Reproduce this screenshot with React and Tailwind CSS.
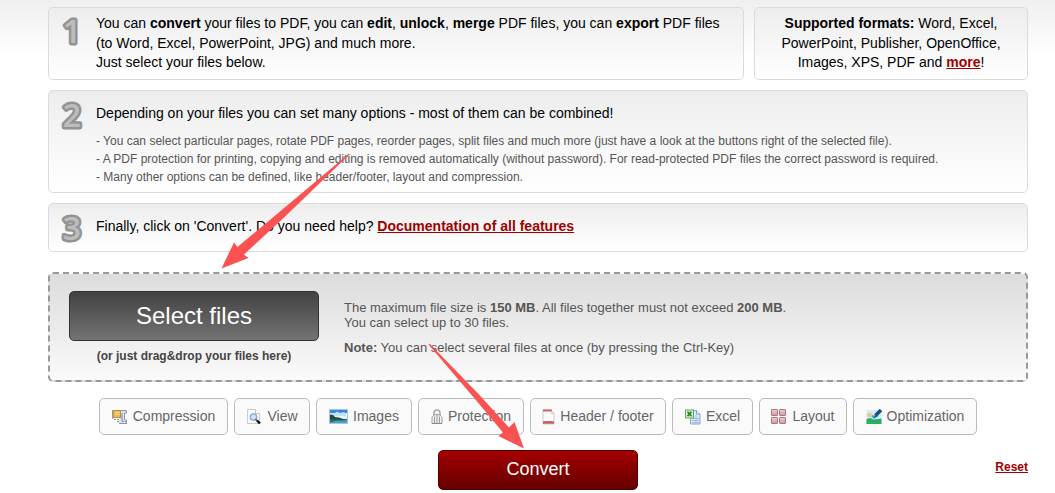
import { useState } from "react";

// Small 16px icons for the option buttons
const CompressionIcon = () => (
  <svg width="16" height="16" viewBox="0 0 16 16" className="shrink-0">
    <path d="M8 1.500h6.500v2.500h-2v7h2v3.500H7" fill="#d9e1ec" stroke="#8f9aa8" />
    <path d="M10 4v8" stroke="#8d99a8" strokeWidth="1.200" />
    <rect x="0.500" y="1.500" width="8" height="7" fill="#f1b43c" stroke="#b9924a" />
    <path d="M3 3.500h4.500M3 5.500h4.500" stroke="#fbdc8c" />
    <path d="M1 1.500v8.500" stroke="#8796a8" />
    <path d="M2 10.500h5M5 12.500h3M8 14.500h7M10 12.500h5" stroke="#8a94a2" strokeDasharray="2 1" />
  </svg>
);

const ViewIcon = () => (
  <svg width="16" height="16" viewBox="0 0 16 16" className="shrink-0">
    <path d="M1.500 0.500h8l4 4v10h-12z" fill="#f8f9fb" stroke="#c8cbd0" />
    <path d="M9.500 0.500v4h4" fill="#fff" stroke="#c3c6cc" />
    <circle cx="7.500" cy="8" r="3.200" fill="#cfe3f7" stroke="#84a8cf" strokeWidth="1.300" />
    <path d="M9.500 10l1.500 1.500" stroke="#555" strokeWidth="1.600" />
    <path d="M11 11.500l3 3" stroke="#111" strokeWidth="2.400" />
  </svg>
);

const ImagesIcon = () => (
  <svg width="19" height="15" viewBox="0 0 19 15" className="shrink-0">
    <rect x="0.500" y="0.500" width="18" height="14" fill="#e4f3fc" stroke="#a9c6dd" />
    <rect x="1" y="1" width="17" height="3" fill="#3888d6" />
    <path d="M2 4h4l2-1.500 3 1.500 4-1 2 2v2H3z" fill="#bfe2f7" />
    <rect x="1" y="10" width="17" height="4" fill="#4d9fc4" />
    <path d="M1 5.500l3 .500 2 2 4 .500 4 1.500 4 .500v.800H1z" fill="#1f4f3c" />
    <path d="M1 10.500h10l4 1H8l-7 2z" fill="#256a72" />
  </svg>
);

const ProtectionIcon = () => (
  <svg width="12" height="16" viewBox="0 0 12 16" className="shrink-0">
    <path d="M3 8V4a3 3 0 0 1 6 0v4" fill="none" stroke="#aaa" strokeWidth="1.600" />
    <path d="M1 14.500V9c0-2 2-3.500 5-3.500S11 7 11 9v5.500z" fill="#efefef" stroke="#a2a2a2" />
    <path d="M3.500 7.500V14M6 6v8M8.500 7.500V14" stroke="#999" />
    <path d="M1 14.500h10" stroke="#888" />
  </svg>
);

const HeaderFooterIcon = () => (
  <svg width="13" height="16" viewBox="0 0 13 16" className="shrink-0">
    <path d="M1 1h8l3 3v11H1z" fill="#fbfbfc" stroke="#cfcbd0" />
    <path d="M1 1.500h9" stroke="#d75f6b" strokeWidth="2" />
    <path d="M9.500 2v2.500h2.500" fill="#fff" stroke="#ccc" />
    <path d="M1 13.500h11" stroke="#d05a66" strokeWidth="2.500" />
    <path d="M3 12.500h7" stroke="#a9707a" />
  </svg>
);

const ExcelIcon = () => (
  <svg width="16" height="16" viewBox="0 0 16 16" className="shrink-0">
    <path d="M5.500 1.500h6l3.500 3.500v10h-9.500z" fill="#dce8fa" stroke="#8aa5d2" />
    <path d="M11.500 1.500v3.500h3.500" fill="#fff" stroke="#7e9bcb" />
    <path d="M7 9.500h7M7 11.500h7M7 13.500h7M11 6v8" stroke="#a4bbe3" />
    <rect x="0.500" y="1" width="8" height="8" fill="#dff2d0" stroke="#67a957" />
    <path d="M2.500 2.800l4 4.400M6.500 2.800l-4 4.400" stroke="#1f7a26" strokeWidth="1.700" />
  </svg>
);

const LayoutIcon = () => (
  <svg width="16" height="16" viewBox="0 0 16 16" className="shrink-0">
    <defs>
      <linearGradient id="tile" x1="0" y1="0" x2="0" y2="1">
        <stop offset="0" stopColor="#ecd3d6" />
        <stop offset="1" stopColor="#d4929b" />
      </linearGradient>
    </defs>
    <g fill="url(#tile)" stroke="#a9777e">
      <rect x="0.500" y="0.500" width="6" height="6" rx="0.500" />
      <rect x="8.500" y="0.500" width="6" height="6" rx="0.500" />
      <rect x="0.500" y="8.500" width="6" height="6" rx="0.500" />
      <rect x="8.500" y="8.500" width="6" height="6" rx="0.500" />
    </g>
  </svg>
);

const OptimizationIcon = () => (
  <svg width="16" height="16" viewBox="0 0 16 16" className="shrink-0">
    <rect x="0.500" y="1" width="15" height="14" fill="#d3ecfb" />
    <circle cx="3.500" cy="6" r="2.300" fill="#efc37e" />
    <path d="M0.500 10l4-1 3 1.500 8-1V15H.500z" fill="#27b05f" />
    <path d="M6 6.500l2.500 2.500" stroke="#3e9dc4" strokeWidth="2" />
    <path d="M15 1L9.500 6.500" stroke="#13507d" strokeWidth="3.500" />
    <path d="M9 5l-1.500 4.500L12 7.500z" fill="#12668f" />
  </svg>
);

const options = [
  { label: "Compression", icon: CompressionIcon, width: "w-[129px]" },
  { label: "View", icon: ViewIcon, width: "w-[76px]" },
  { label: "Images", icon: ImagesIcon, width: "w-[96px]" },
  { label: "Protection", icon: ProtectionIcon, width: "w-[106px]" },
  { label: "Header / footer", icon: HeaderFooterIcon, width: "w-[136px]" },
  { label: "Excel", icon: ExcelIcon, width: "w-[81px]" },
  { label: "Layout", icon: LayoutIcon, width: "w-[88px]" },
  { label: "Optimization", icon: OptimizationIcon, width: "w-[124px]" },
];

const StepNumber = ({ number }) => (
  <svg width="24" height="48" viewBox="0 0 24 48" className="-mt-2 shrink-0">
    <text
      x="12"
      y="37"
      textAnchor="middle"
      className="fill-[#bdbdbd] stroke-[#939393] stroke-[5px] font-['Open_Sans',sans-serif] text-[32px] font-semibold [paint-order:stroke] [stroke-linejoin:round]"
    >
      {number}
    </text>
  </svg>
);

const Panel = ({ className, children }) => (
  <div className={`rounded-[5px] border border-[#dbdbdb] bg-linear-to-b from-[#ededed] to-white ${className}`}>
    {children}
  </div>
);

const App = () => {
  const [active, setActive] = useState("");

  return (
    <div className="relative h-[493px] overflow-hidden bg-white bg-[linear-gradient(#efefef,#fff_56px)] pt-[7px] font-['Liberation_Sans',Arial,sans-serif] text-sm text-black">
      <div className="ml-12 w-[980px]">
        {/* Steps */}
        <div className="flex gap-[10px]">
          <Panel className="flex h-[73px] w-[696px] pl-[11px] pt-[6px]">
            <StepNumber number={1} />
            <p className="ml-3 whitespace-nowrap leading-[19.6px]">
              You can <b>convert</b> your files to PDF, you can <b>edit</b>, <b>unlock</b>, <b>merge</b> PDF files, you can <b>export</b> PDF files
              <br />
              (to Word, Excel, PowerPoint, JPG) and much more.
              <br />
              Just select your files below.
            </p>
          </Panel>
          <Panel className="h-[73px] w-[274px] pt-[6px] text-center">
            <p className="leading-[19.6px]">
              <b>Supported formats:</b> Word, Excel,
              <br />
              PowerPoint, Publisher, OpenOffice,
              <br />
              Images, XPS, PDF and <a href="#more" className="font-bold text-[#a00000] underline">more</a>!
            </p>
          </Panel>
        </div>

        <Panel className="mt-[10px] flex h-[103px] pl-[11px] pt-[7px]">
          <StepNumber number={2} />
          <div className="ml-3 whitespace-nowrap pt-[5px]">
            <p className="leading-5">Depending on your files you can set many options - most of them can be combined!</p>
            <div className="mt-[9px] text-xs leading-[18px] text-[#555]">
              <p>- You can select particular pages, rotate PDF pages, reorder pages, split files and much more (just have a look at the buttons right of the selected file).</p>
              <p>- A PDF protection for printing, copying and editing is removed automatically (without password). For read-protected PDF files the correct password is required.</p>
              <p>- Many other options can be defined, like header/footer, layout and compression.</p>
            </div>
          </div>
        </Panel>

        <Panel className="mt-[10px] flex h-[49px] pl-[11px] pt-[7px]">
          <StepNumber number={3} />
          <p className="ml-3 whitespace-nowrap pt-[5px] leading-5">
            Finally, click on 'Convert'. Do you need help?{" "}
            <a href="#docs" className="font-bold text-[#a00000] underline">Documentation of all features</a>
          </p>
        </Panel>

        {/* Drop zone */}
        <div className="mt-5 flex h-[110px] rounded-[5px] border-2 border-dashed border-[#999] bg-linear-to-b from-[#dcdcdc] to-[#fafafa] pl-[19px] pt-[17px]">
          <div className="w-[250px] text-center">
            <button className="h-[50px] w-full rounded-[5px] border border-[#333] bg-linear-to-b from-[#424242] to-[#747474] text-2xl leading-none text-white">
              Select files
            </button>
            <p className="mt-[7px] text-xs font-bold leading-4 text-[#444]">(or just drag&amp;drop your files here)</p>
          </div>
          <div className="ml-[25px] pt-[9px] text-[13px] leading-[15px] text-[#555]">
            <p>The maximum file size is <b>150 MB</b>. All files together must not exceed <b>200 MB</b>.</p>
            <p>You can select up to 30 files.</p>
            <p className="mt-[10px]"><b>Note:</b> You can select several files at once (by pressing the Ctrl-Key)</p>
          </div>
        </div>

        {/* Option buttons */}
        <div className="ml-[51px] mt-4 flex gap-[6px]">
          {options.map((option) => (
            <button
              key={option.label}
              onClick={() => setActive(option.label)}
              aria-pressed={active === option.label}
              className={`flex h-[37px] items-center justify-center gap-[5px] rounded-[5px] border border-[#bbb] bg-[#fafafa] text-[#666] ${option.width}`}
            >
              <option.icon />
              <span className="whitespace-nowrap pb-[2px] leading-5">{option.label}</span>
            </button>
          ))}
        </div>

        <div className="mt-[15px] grid grid-cols-[1fr_200px_1fr] items-center">
          <button className="col-start-2 h-10 rounded-[5px] border border-[#570000] bg-linear-to-b from-[#a50000] to-[#650000] pb-[2px] text-lg leading-none text-white">
            Convert
          </button>
          <a href="#reset" className="mt-[-6px] justify-self-end text-xs font-bold text-[#a00000] underline">Reset</a>
        </div>
      </div>

      {/* Arrows over the page */}
      <svg className="pointer-events-none absolute left-0 top-0" width="1055" height="493" viewBox="0 0 1055 493">
        <g fill="#fa5252">
          <path d="M349 153.500L349.500 154.500L282 219.500L244 254.500L248.500 258L221.500 268.500L234 242.500L237.500 247L277 214Z" />
          <path d="M428.500 344.500L429.500 343.500L479.500 395L509 427.500L514.500 422L524 448.500L498.500 436L503 432.500L475 399Z" />
        </g>
      </svg>
    </div>
  );
};

export default App;
